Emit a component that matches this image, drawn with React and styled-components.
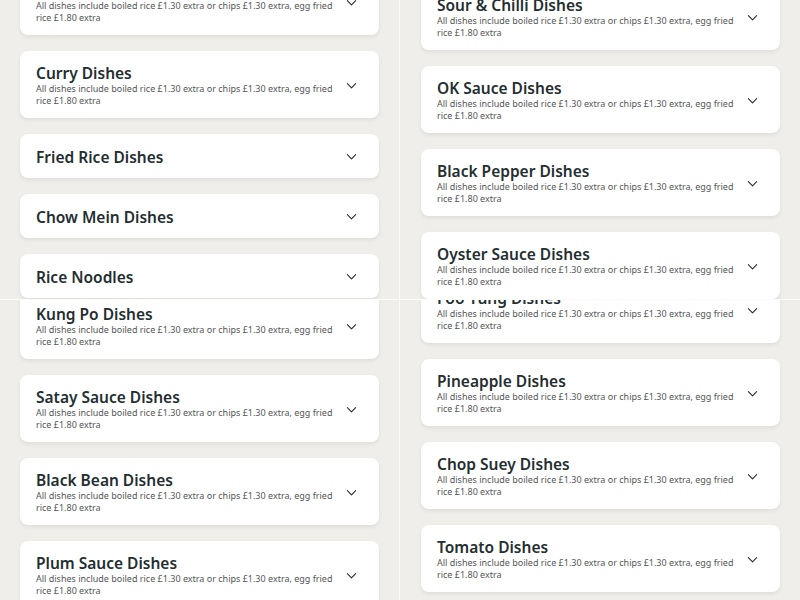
import React from "react";
import styled, { createGlobalStyle } from "styled-components";

const Global = createGlobalStyle`
  html, body { margin: 0; padding: 0; background: #fafaf8; }
  body { font-family: "Noto Sans", "Open Sans", sans-serif; }
  * { box-sizing: border-box; }
`;

const Board = styled.div`
  width: 800px;
  height: 600px;
  display: grid;
  grid-template-columns: 399px 400px;
  grid-template-rows: 299px 300px;
  gap: 1px;
  background: #fbfbf9;
  overflow: hidden;
`;

const Tile = styled.div`
  background: #efeeea;
  overflow: hidden;
  padding: 0 ${(p) => (p.$right ? "19px 0 21px" : "20px")};
`;

const List = styled.div`
  display: flex;
  flex-direction: column;
  gap: 16px;
  margin-top: ${(p) => p.$offset}px;
`;

const Card = styled.div`
  background: #ffffff;
  border-radius: 8px;
  box-shadow: 0 2px 4px rgba(0, 0, 0, 0.07);
  display: flex;
  align-items: center;
  justify-content: space-between;
  padding: 12px 22px 11px 16px;
  width: 359px;
  min-height: 44px;
`;

const Texts = styled.div`
  display: flex;
  flex-direction: column;
  max-width: 300px;
`;

const Title = styled.div`
  font-family: "Noto Sans", "Open Sans", sans-serif;
  font-size: 15.5px;
  line-height: 20px;
  font-weight: 600;
  color: #242e30;
  white-space: nowrap;
`;

const Desc = styled.div`
  font-size: 9px;
  line-height: 12px;
  color: #535757;
`;

const Chevron = () => (
  <svg width="11" height="11" viewBox="0 0 12 12" fill="none">
    <path d="M1.5 4 L6 8.5 L10.5 4" stroke="#242e30" strokeWidth="1.2" strokeLinecap="round" strokeLinejoin="round" />
  </svg>
);

const DESC = "All dishes include boiled rice £1.30 extra or chips £1.30 extra, egg fried rice £1.80 extra";

const tiles = [
  {
    offset: -32,
    items: [
      ["Sweet & Sour Dishes", true],
      ["Curry Dishes", true],
      ["Fried Rice Dishes", false],
      ["Chow Mein Dishes", false],
      ["Rice Noodles", false],
    ],
  },
  {
    offset: -17,
    right: true,
    items: [
      ["Sour & Chilli Dishes", true],
      ["OK Sauce Dishes", true],
      ["Black Pepper Dishes", true],
      ["Oyster Sauce Dishes", true],
    ],
  },
  {
    offset: -8,
    items: [
      ["Kung Po Dishes", true],
      ["Satay Sauce Dishes", true],
      ["Black Bean Dishes", true],
      ["Plum Sauce Dishes", true],
    ],
  },
  {
    offset: -24,
    right: true,
    items: [
      ["Foo Yung Dishes", true],
      ["Pineapple Dishes", true],
      ["Chop Suey Dishes", true],
      ["Tomato Dishes", true],
      ["Lemon Sauce Dishes", true],
    ],
  },
];

export default function App() {
  return (
    <>
      <Global />
      <Board>
        {tiles.map((t, i) => (
          <Tile key={i} $right={t.right}>
            <List $offset={t.offset}>
              {t.items.map(([name, hasDesc]) => (
                <Card key={name}>
                  <Texts>
                    <Title>{name}</Title>
                    {hasDesc && <Desc>{DESC}</Desc>}
                  </Texts>
                  <Chevron />
                </Card>
              ))}
            </List>
          </Tile>
        ))}
      </Board>
    </>
  );
}
